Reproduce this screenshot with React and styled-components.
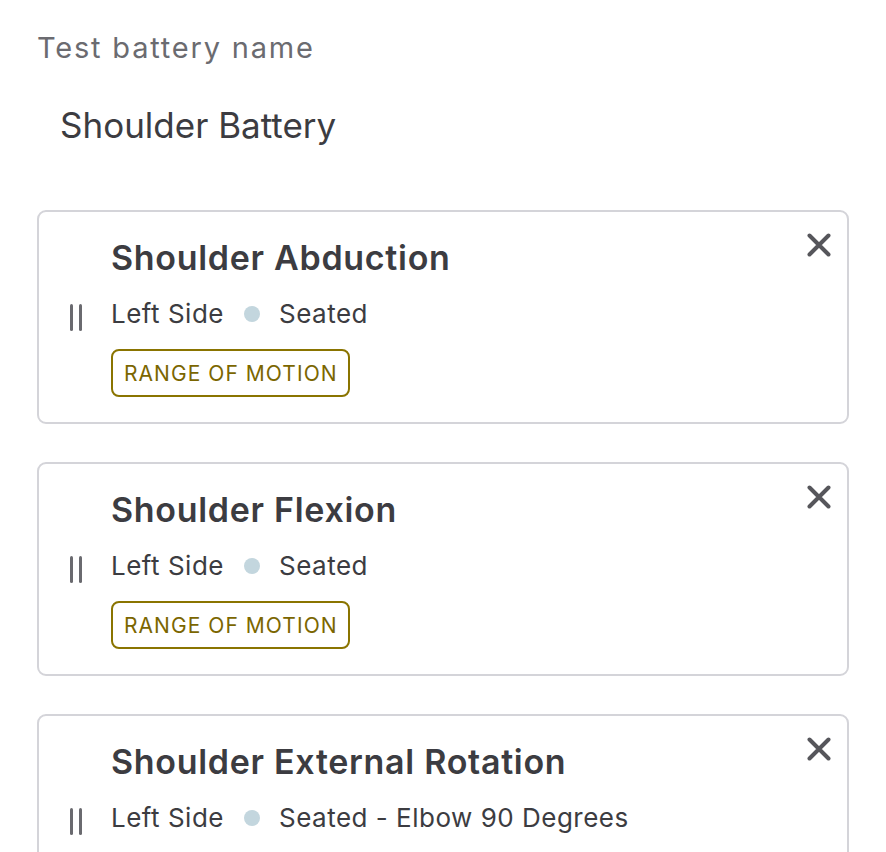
import React from "react";
import styled, { createGlobalStyle } from "styled-components";

const Global = createGlobalStyle`
  html, body { margin: 0; padding: 0; background: #ffffff; }
  body { font-family: Inter, "Noto Sans", sans-serif; -webkit-font-smoothing: antialiased; }
  * { box-sizing: border-box; }
`;

const Page = styled.div`
  padding: 30px 37px 0 37px;
  width: 886px;
  height: 852px;
  overflow: hidden;
`;

const Label = styled.div`
  font-size: 29px;
  line-height: 36px;
  letter-spacing: 1.8px;
  color: #6b6b70;
`;

const NameValue = styled.div`
  margin-top: 37px;
  padding-left: 23px;
  font-size: 35px;
  line-height: 44px;
  color: #3c3c41;
`;

const List = styled.div`
  margin-top: 63px;
  display: flex;
  flex-direction: column;
  gap: 38px;
  width: 812px;
`;

const Card = styled.div`
  display: flex;
  align-items: center;
  border: 2px solid #d4d4d9;
  border-radius: 9px;
  padding: 26px 16px 25px 30px;
`;

const Handle = styled.div`
  width: 42px;
  flex: none;
  display: flex;
  gap: 6px;
  padding-left: 1px;
  span {
    display: block;
    width: 3px;
    height: 27px;
    border-radius: 2px;
    background: #6a6a6f;
  }
`;

const Body = styled.div`
  flex: 1;
  display: flex;
  flex-direction: column;
  align-items: flex-start;
`;

const Title = styled.div`
  font-size: 34px;
  font-weight: 600;
  line-height: 40px;
  letter-spacing: 0.7px;
  color: #3c3c41;
`;

const Meta = styled.div`
  margin-top: 19px;
  display: flex;
  align-items: center;
  font-size: 26px;
  line-height: 34px;
  letter-spacing: 0.5px;
  color: #3c3c41;
`;

const Dot = styled.span`
  width: 16px;
  height: 16px;
  border-radius: 50%;
  background: #c3d6de;
  margin: 0 19px 0 20px;
`;

const Badge = styled.div`
  margin-top: 18px;
  height: 48px;
  padding: 0 10px 0 11px;
  display: flex;
  align-items: center;
  border: 2px solid #8a7400;
  border-radius: 8px;
  font-size: 21px;
  letter-spacing: 1.05px;
  color: #7b6600;
`;

const Close = styled.button`
  align-self: flex-start;
  flex: none;
  margin-top: -5px;
  width: 24px;
  height: 24px;
  padding: 0;
  border: none;
  background: none;
  display: flex;
  align-items: center;
  justify-content: center;
`;

const CloseIcon = () => (
  <svg width="24" height="24" viewBox="0 0 24 24">
    <path d="M2.5 2.5 L21.5 21.5 M21.5 2.5 L2.5 21.5" stroke="#56565b" strokeWidth="4" strokeLinecap="round" />
  </svg>
);

const items = [
  { title: "Shoulder Abduction", side: "Left Side", pos: "Seated", tag: "RANGE OF MOTION" },
  { title: "Shoulder Flexion", side: "Left Side", pos: "Seated", tag: "RANGE OF MOTION" },
  { title: "Shoulder External Rotation", side: "Left Side", pos: "Seated - Elbow 90 Degrees", tag: "RANGE OF MOTION" },
];

export default function App() {
  return (
    <>
      <Global />
      <Page>
        <Label>Test battery name</Label>
        <NameValue>Shoulder Battery</NameValue>
        <List>
          {items.map((it) => (
            <Card key={it.title}>
              <Handle><span /><span /></Handle>
              <Body>
                <Title>{it.title}</Title>
                <Meta>
                  {it.side}
                  <Dot />
                  {it.pos}
                </Meta>
                <Badge>{it.tag}</Badge>
              </Body>
              <Close aria-label="Remove"><CloseIcon /></Close>
            </Card>
          ))}
        </List>
      </Page>
    </>
  );
}
